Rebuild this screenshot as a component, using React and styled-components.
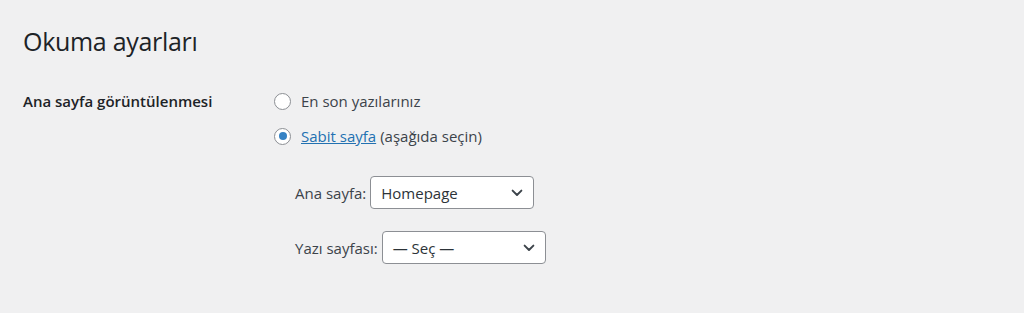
import React from 'react';
import styled, { createGlobalStyle } from 'styled-components';

const GlobalStyle = createGlobalStyle`
  html, body {
    margin: 0;
    padding: 0;
    background: #f0f0f1;
  }
  body {
    font-family: 'Open Sans', 'Noto Sans', sans-serif;
    color: #3c434a;
  }
`;

const Page = styled.div`
  width: 1024px;
  height: 313px;
  padding: 22px 0 0 23px;
  box-sizing: border-box;
  background: #f0f0f1;
  overflow: hidden;
`;

const Title = styled.h1`
  margin: 0;
  font-size: 25px;
  font-weight: 400;
  line-height: 38px;
  color: #1d2327;
  letter-spacing: -0.3px;
`;

const FormRow = styled.div`
  display: grid;
  grid-template-columns: 251px 1fr;
  margin-top: 29px;
`;

const RowLabel = styled.div`
  font-size: 15px;
  font-weight: 600;
  color: #1d2327;
  line-height: 24px;
`;

const Options = styled.div`
  display: flex;
  flex-direction: column;
  gap: 11px;
`;

const OptionLine = styled.label`
  display: flex;
  align-items: center;
  height: 24px;
  font-size: 15px;
  line-height: 24px;
  color: #3c434a;
`;

const Radio = styled.span`
  width: 17px;
  height: 17px;
  box-sizing: border-box;
  border: 1px solid #8c8f94;
  border-radius: 50%;
  background: #fff;
  margin-right: 10px;
  display: flex;
  align-items: center;
  justify-content: center;
  flex-shrink: 0;

  &::after {
    content: '';
    width: 8px;
    height: 8px;
    border-radius: 50%;
    background: ${(p) => (p.$checked ? '#3582c4' : 'transparent')};
  }
`;

const PageLink = styled.a`
  color: #2271b1;
  text-decoration: underline;
  margin-right: 4px;
`;

const Pickers = styled.div`
  display: flex;
  flex-direction: column;
  gap: 22px;
  margin: 28px 0 0 21px;
`;

const PickerLine = styled.div`
  display: flex;
  align-items: center;
  font-size: 15px;
  color: #3c434a;
`;

const SelectBox = styled.div`
  display: flex;
  align-items: center;
  justify-content: space-between;
  width: 164px;
  height: 33px;
  box-sizing: border-box;
  margin-left: 4px;
  padding: 0 8px 0 10px;
  background: #fff;
  border: 1px solid #8c8f94;
  border-radius: 4px;
  font-size: 15px;
  color: #2c3338;
`;

const Chevron = () => (
  <svg width="16" height="16" viewBox="0 0 20 20" aria-hidden="true">
    <path d="M4.5 7l5.5 5.5L15.5 7" fill="none" stroke="#3c434a" strokeWidth="2.4" strokeLinecap="round" strokeLinejoin="round" />
  </svg>
);

const Select = ({ value }) => (
  <SelectBox>
    <span>{value}</span>
    <Chevron />
  </SelectBox>
);

export default function App() {
  return (
    <>
      <GlobalStyle />
      <Page>
        <Title>Okuma ayarları</Title>
        <FormRow>
          <RowLabel>Ana sayfa görüntülenmesi</RowLabel>
          <div>
            <Options>
              <OptionLine>
                <Radio />
                En son yazılarınız
              </OptionLine>
              <OptionLine>
                <Radio $checked />
                <PageLink href="#">Sabit sayfa</PageLink>
                (aşağıda seçin)
              </OptionLine>
            </Options>
            <Pickers>
              <PickerLine>
                Ana sayfa:
                <Select value="Homepage" />
              </PickerLine>
              <PickerLine>
                Yazı sayfası:
                <Select value="— Seç —" />
              </PickerLine>
            </Pickers>
          </div>
        </FormRow>
      </Page>
    </>
  );
}
